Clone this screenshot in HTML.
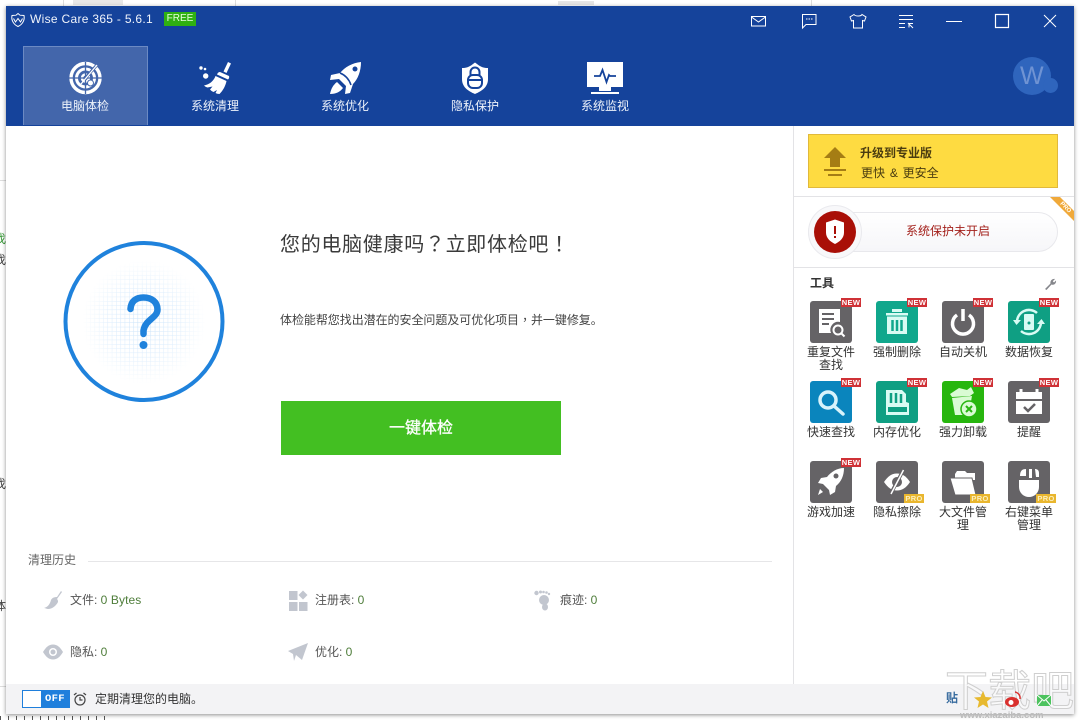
<!DOCTYPE html>
<html><head><meta charset="utf-8">
<style>
*{margin:0;padding:0;box-sizing:border-box}
html,body{width:1080px;height:720px;overflow:hidden;background:#fff;font-family:"Liberation Sans","Noto Sans CJK SC",sans-serif}
.a{position:absolute}
.t{position:absolute;white-space:nowrap;line-height:1}
.tc{font-family:"Noto Sans CJK TC",sans-serif}
#win{position:absolute;left:6px;top:6px;width:1068px;height:708px;background:#fff;box-shadow:0 1px 4px rgba(0,0,0,.45)}
.nav{position:absolute;top:99px;width:100px;text-align:center;color:#eef3fb;font-size:12px;line-height:14px}
.ico{position:absolute;width:42px;height:42px;border-radius:3px;background:#656366}
.new,.pro{position:absolute;width:20px;height:9px;font-size:7.5px;line-height:9px;font-weight:bold;text-align:center;color:#fff;letter-spacing:.3px}
.new{background:#cf3136}
.pro{background:#e9b62e;color:#fbeebc}
.lb{position:absolute;width:54px;text-align:center;font-size:12px;line-height:13px;color:#333}
.h{position:absolute;font-size:12px;line-height:14px;color:#555;white-space:nowrap}
.h b{font-weight:normal;color:#4e7d3a;letter-spacing:.1px}
.i{position:absolute;left:0;top:0}
</style></head><body>
<div class="t" style="left:-6px;top:233px;font-size:12px;color:#3a9a3a">找</div>
<div class="t" style="left:-6px;top:254px;font-size:12px;color:#444">找</div>
<div class="t" style="left:-6px;top:478px;font-size:12px;color:#444">找</div>
<div class="t" style="left:-6px;top:600px;font-size:12px;color:#444">体</div>
<div class="a" style="left:63px;top:0;width:1px;height:6px;background:#ddd"></div>
<div class="a" style="left:235px;top:0;width:1px;height:6px;background:#ddd"></div>
<div class="a" style="left:811px;top:0;width:1px;height:6px;background:#ddd"></div>
<div class="a" style="left:73px;top:0;width:50px;height:5px;background:#e8e8e8"></div>
<div class="a" style="left:558px;top:1px;width:36px;height:4px;background:#e6e6e6"></div>
<div class="a" style="left:0;top:180px;width:6px;height:1px;background:#ddd"></div>
<div class="a" style="left:0;top:686px;width:6px;height:1px;background:#ddd"></div>
<div class="a" style="left:0;top:716px;width:110px;height:4px;background:repeating-linear-gradient(90deg,#555 0 1px,#fff 1px 8px)"></div>

<div id="win"></div>
<!-- header -->
<div class="a" style="left:6px;top:6px;width:1068px;height:120px;background:#15439b"></div>
<svg class="a" style="left:10px;top:12px" width="16" height="16" viewBox="0 0 16 16" fill="none" stroke="#fff" stroke-width="1"><path d="M8 1.500L10 3.200 14 3.500C15 8 12.500 12.500 8 14.500 3.500 12.500 1 8 2 3.500L6 3.200Z"/><path d="M3.500 6.500L5.500 10 8 6.500 10.500 10 12.500 6.500"/></svg>
<div class="t" style="left:30px;top:13px;font-size:12px;letter-spacing:.3px;color:#f0f4fb">Wise Care 365 - 5.6.1</div>
<div class="a" style="left:164px;top:12px;width:32px;height:14px;background:#2fb012;color:#e8ffe0;font-size:10px;line-height:14px;text-align:center">FREE</div>

<svg class="a" style="left:740px;top:6px" width="334" height="40" viewBox="740 6 334 40" fill="none" stroke="#fff" stroke-width="1">
<path d="M751.500 16.500h14v9.500h-14zM751.500 17l7 5 7-5"/>
<path d="M802.500 14.500h13.500v10h-10l-3.500 3.500zM806 19h1.500M808.500 19h1.500M811 19h1.500" />
<path d="M854 14.500l-4 2.500 1.500 4 2-.5v7.500h9v-7.500l2 .5 1.500-4-4-2.500c-1 2-6.500 2-8 0z"/>
<path d="M899 15.500h14M899 19.500h14M899 23.500h6M899 27.500h6M909 27.500v-4h4M908 23l5 5" stroke-width="1"/>
<path d="M946 21.500h16"/>
<path d="M995.500 14.500h13v13h-13z" stroke-width="1.200"/>
<path d="M1044 15l12 12M1056 15l-12 12"/>
</svg>

<!-- active tab -->
<div class="a" style="left:23px;top:46px;width:125px;height:79px;background:#4366ab;border:1px solid #6c8ac3;border-bottom:0"></div>

<!-- radar -->
<svg class="a" style="left:67px;top:60px" width="38" height="36" viewBox="0 0 38 36" fill="none" stroke="#fff">
<circle cx="18.500" cy="18" r="14.500" stroke-width="3.400"/><circle cx="18.500" cy="18" r="9" stroke-width="3"/><circle cx="18.500" cy="18" r="3.500" stroke-width="2.500"/>
<path d="M18.500 2v32M2 18h33" stroke="#4366ab" stroke-width="1.300"/><path d="M29 6L18.500 18" stroke="#4366ab" stroke-width="3"/><path d="M30 5L14 24" stroke="#fff" stroke-width="1.300"/><circle cx="23.500" cy="23" r="3" fill="#fff" stroke="#4366ab"/></svg>
<!-- broom -->
<svg class="a" style="left:197px;top:60px" width="38" height="36" viewBox="0 0 38 36" fill="#fff">
<path d="M31 2l3 1.500-4.500 9.500-3-1.500z"/><path d="M23 12l9 4c.5 1.500 0 2.500-1 3.500l-11-5c.5-1.500 1.500-2.500 3-2.500z"/>
<path d="M18.500 16l11 5c-1 5-3.500 9.500-7 13-1.500 0-3-.5-4-1l1.500-3-3.500 2c-1.500-.5-2.500-1.500-3.500-2.500l2.500-3-5 1c-1.500-.5-2.500-1-3.500-2 5-1 9.500-4 11.500-9.500z"/>
<circle cx="4" cy="8" r="1.700"/><circle cx="8" cy="9" r="1.300"/><circle cx="8.700" cy="16" r="2.700"/></svg>
<!-- rocket -->
<svg class="a" style="left:328px;top:60px" width="36" height="36" viewBox="0 0 36 36" fill="#fff">
<path d="M33 2c-9 1-16 5-21 11l-9 2-1 5 9-1 7 7-1 8 5-1 3-9c5-5 8-13 8-22z"/>
<path d="M12 13c5 2 9 6 11 12" fill="none" stroke="#15439b" stroke-width="1.500"/>
<circle cx="27" cy="9" r="2.500" fill="#15439b"/><path d="M9 22l6 6c-3 4-7 6-13 6 1-5 3-9 7-12z"/></svg>
<!-- shield -->
<svg class="a" style="left:461px;top:61px" width="28" height="34" viewBox="0 0 28 34">
<path d="M14 1.500l4 3c2.500 1.500 5 2.500 9 2.500v11c0 8-6 12-13 15C7 30 1 26 1 18V7c4 0 6.500-1 9-2.500z" fill="#fff"/>
<path d="M9.500 15v-4a4.500 4.500 0 0 1 9 0v4" fill="none" stroke="#15439b" stroke-width="2"/>
<rect x="7" y="14" width="14" height="13" rx="5" fill="none" stroke="#15439b" stroke-width="2"/><path d="M8 19h12" stroke="#15439b" stroke-width="2"/></svg>
<!-- monitor -->
<svg class="a" style="left:587px;top:62px" width="36" height="33" viewBox="0 0 36 33">
<rect width="36" height="25" fill="#fff"/><rect x="12" y="25" width="12" height="4" fill="#fff"/><rect x="4" y="30" width="28" height="2" fill="#fff"/>
<path d="M7 14h6l2.500-6 4 12 2.500-7 1 1h6" fill="none" stroke="#15439b" stroke-width="1.800"/></svg>

<div class="nav" style="left:35px">电脑体检</div>
<div class="nav" style="left:165px">系统清理</div>
<div class="nav" style="left:295px">系统优化</div>
<div class="nav" style="left:425px">隐私保护</div>
<div class="nav" style="left:555px">系统监视</div>

<!-- avatar -->
<div class="a" style="left:1013px;top:57px;width:38px;height:38px;border-radius:50%;background:#2f65bd"></div>
<div class="a" style="left:1043px;top:78px;width:15px;height:15px;border-radius:50%;background:#2f65bd"></div>
<div class="t" style="left:1020px;top:64px;font-size:25px;color:#6f93d3">W</div>

<!-- sidebar divider -->
<div class="a" style="left:793px;top:126px;width:1px;height:558px;background:#e3e3e6"></div>

<!-- main circle -->
<svg class="a" style="left:50px;top:228px" width="190" height="190" viewBox="50 228 190 190">
<defs>
<pattern id="g" width="4.300" height="4.300" patternUnits="userSpaceOnUse"><path d="M0 0h4.300M0 0v4.300" stroke="#c4e0fa" stroke-width="1" fill="none"/></pattern>
<radialGradient id="rg"><stop offset="0" stop-color="#fff"/><stop offset=".6" stop-color="#888"/><stop offset="1" stop-color="#000"/></radialGradient>
<mask id="m"><circle cx="144" cy="322" r="62" fill="url(#rg)"/></mask>
</defs>
<circle cx="144" cy="322" r="62" fill="url(#g)" mask="url(#m)"/>
<circle cx="144" cy="321.500" r="78.500" fill="none" stroke="#1f82dc" stroke-width="4"/>
<path d="M130.500 309C131 301 136 297.500 143.500 297.500 151.500 297.500 157.500 302 157.500 309.500 157.500 318 145.500 319 143.500 330.500V334" fill="none" stroke="#1f82dc" stroke-width="6.500" stroke-linecap="round"/>
<circle cx="143.500" cy="345" r="4" fill="#1f82dc"/></svg>

<div class="t" style="left:280px;top:233px;font-size:20px;letter-spacing:.7px;color:#3a3a3a">您的电脑健康吗<span class="tc">？</span>立即体检吧<span class="tc">！</span></div>
<div class="t" style="left:280px;top:314px;font-size:12px;letter-spacing:-.05px;color:#444">体检能帮您找出潜在的安全问题及可优化项目<span class="tc">，</span>并一键修复。</div>
<div class="a" style="left:281px;top:401px;width:280px;height:54px;background:#43bf22;color:#fff;font-size:16px;line-height:55px;text-align:center;-webkit-text-stroke:.3px #fff">一键体检</div>

<!-- history -->
<div class="h" style="left:28px;top:553px;color:#666">清理历史</div>
<div class="a" style="left:88px;top:561px;width:684px;height:1px;background:#e6e6e8"></div>
<svg class="a" style="left:40px;top:588px" width="300" height="76" viewBox="40 588 300 76" fill="#c2c6cf">
<path d="M61 591l1 1-5 7c1 1 1 2 1 3-2 4-6 7-10 7-1 0-3-1-4-1 4-1 6-4 7-8 1-2 3-3 6-3z"/>
<path d="M289 591h8.500v9H289zM289 602h8.500v9H289zM299 602h8.500v9H299zM303 590.500l4.500 4.500-4.500 4.500-4.500-4.500z"/>
<path d="M43 652c3-5 6-7.500 10-7.500s7 2.500 10 7.500c-3 5-6 7.500-10 7.500s-7-2.500-10-7.500z"/><circle cx="53" cy="652" r="4" fill="#fff"/><circle cx="53" cy="652" r="2.500"/>
<path d="M288 651l20-8-6 17-6-5-2 6-1-7z"/>
</svg>
<svg class="a" style="left:532px;top:588px" width="22" height="24" viewBox="0 0 22 24" fill="#c2c6cf"><ellipse cx="12" cy="12" rx="5" ry="5"/><ellipse cx="13" cy="19" rx="3" ry="3.500"/><circle cx="4.500" cy="5" r="2.200"/><circle cx="8.500" cy="4" r="1.500"/><circle cx="11.500" cy="4" r="1.300"/><circle cx="14.500" cy="4.500" r="1.300"/><circle cx="17" cy="6" r="1.200"/></svg>
<div class="h" style="left:70px;top:593px">文件: <b>0 Bytes</b></div>
<div class="h" style="left:315px;top:593px">注册表: <b>0</b></div>
<div class="h" style="left:560px;top:593px">痕迹: <b>0</b></div>
<div class="h" style="left:70px;top:645px">隐私: <b>0</b></div>
<div class="h" style="left:315px;top:645px">优化: <b>0</b></div>

<!-- upgrade -->
<div class="a" style="left:808px;top:134px;width:250px;height:54px;background:#fedb41;border:1px solid #e1b93b"></div>
<svg class="a" style="left:823px;top:146px" width="24" height="32" viewBox="0 0 24 32" fill="#a57d14"><path d="M12 1l11 11h-6v9H7v-9H1z"/><rect x="1" y="23" width="22" height="2"/><rect x="5" y="28" width="14" height="2"/></svg>
<div class="t" style="left:860px;top:147px;font-size:12px;font-weight:bold;color:#4a3c10">升级到专业版</div>
<div class="t" style="left:861px;top:167px;font-size:12px;word-spacing:1.500px;color:#4a3c10">更快 &amp; 更安全</div>

<div class="a" style="left:794px;top:196px;width:280px;height:1px;background:#e3e3e6"></div>
<div class="a" style="left:808px;top:212px;width:250px;height:40px;border-radius:20px;border:1px solid #e8e8ec;background:linear-gradient(#fff,#f6f6f9)"></div>
<div class="a" style="left:808px;top:205px;width:54px;height:54px;border-radius:50%;background:#f8f8fa;border:1px solid #eaeaee"></div>
<div class="a" style="left:814px;top:211px;width:42px;height:42px;border-radius:50%;background:#a90f07"></div>
<svg class="a" style="left:825px;top:219px" width="20" height="26" viewBox="0 0 20 26"><path d="M10 .5L19 3.500v10c0 5.500-4 9-9 11.500-5-2.500-9-6-9-11.500v-10z" fill="#fff"/><path d="M10 7v8" stroke="#a90f07" stroke-width="2"/><path d="M10 17v2" stroke="#a90f07" stroke-width="2"/></svg>
<div class="t" style="left:906px;top:225px;font-size:12px;color:#a3201b">系统保护未开启</div>
<svg class="a" style="left:1050px;top:197px" width="24" height="24"><path d="M0 0h10l14 14v10z" fill="#f0a93a"/><text transform="translate(14.500 11.500) rotate(45)" font-size="6" font-weight="bold" fill="#fff" font-family="Liberation Sans" text-anchor="middle">PRO</text></svg>
<div class="a" style="left:794px;top:267px;width:280px;height:1px;background:#e3e3e6"></div>
<div class="t" style="left:810px;top:277px;font-size:12px;font-weight:bold;color:#333">工具</div>
<svg class="a" style="left:1043px;top:277px" width="14" height="14" viewBox="0 0 14 14"><path d="M2 12L7.500 6.500C7 4 9 1.500 12 2L9.800 4.200 11 5.500 13 3.500C13.500 6.500 11 8.500 8.500 7.500L3.500 13z" fill="#85868b"/></svg>

<!-- tools row1 -->
<div class="ico" style="left:810px;top:301px"><svg class="i" width="42" height="42" viewBox="0 0 42 42"><path d="M9 8h21v13a8 8 0 0 0-9 11H9z" fill="#fff"/><path d="M12 13h12M12 18h12M12 23h7" stroke="#656366" stroke-width="2"/><circle cx="28" cy="29" r="4.500" fill="none" stroke="#fff" stroke-width="2"/><path d="M31 32l3.500 3.500" stroke="#fff" stroke-width="2"/></svg></div>
<div class="ico" style="left:876px;top:301px;background:#10a78c"><svg class="i" width="42" height="42" viewBox="0 0 42 42" fill="#d9fbf3"><path d="M10 12h22v2.500H10zM16 8h10v3H16z"/><path d="M11 15.500h20V33H11z"/><path d="M16.500 19v11M21 19v11M25.500 19v11" stroke="#10a78c" stroke-width="2.500"/></svg></div>
<div class="ico" style="left:942px;top:301px"><svg class="i" width="42" height="42" viewBox="0 0 42 42" fill="none" stroke="#fff" stroke-width="3.500"><path d="M15 14a10.500 10.500 0 1 0 12 0"/><path d="M21 8v12"/></svg></div>
<div class="ico" style="left:1008px;top:301px;background:#0f9f83"><svg class="i" width="42" height="42" viewBox="0 0 42 42" fill="none" stroke="#d9fbf3" stroke-width="2.500"><path d="M9 21a12 12 0 0 1 20-9M33 21a12 12 0 0 1-20 9"/><path d="M5 19l3.500 5L13 19zM37 23l-3.500-5L29 23z" fill="#d9fbf3" stroke="none"/><rect x="16" y="13" width="10" height="16" rx="1" fill="#d9fbf3" stroke="none"/><circle cx="21" cy="22" r="1.500" fill="#0f9f83" stroke="none"/></svg></div>
<!-- row2 -->
<div class="ico" style="left:810px;top:381px;background:#0a85bd"><svg class="i" width="42" height="42" viewBox="0 0 42 42" fill="none" stroke="#d8f3fb" stroke-width="3.500"><circle cx="18" cy="19" r="8"/><path d="M24 25l9 8" stroke-linecap="round"/></svg></div>
<div class="ico" style="left:876px;top:381px;background:#0f9f83"><svg class="i" width="42" height="42" viewBox="0 0 42 42"><path d="M10 9h16l4 4v8l3 1v12H10z" fill="#d9fbf3"/><path d="M15 12v10M20 12v10M25 13v9" stroke="#0f9f83" stroke-width="2.500"/><rect x="12" y="26" width="19" height="5" fill="#0f9f83"/></svg></div>
<div class="ico" style="left:942px;top:381px;background:#27b60e"><svg class="i" width="42" height="42" viewBox="0 0 42 42"><path d="M8 13l9-6 8 2 4-3 3 6-4 3-18 1z" fill="#d9fbd3"/><path d="M10 17l20-2-2 11-7 8h-8z" fill="#d9fbd3"/><circle cx="27" cy="28" r="8" fill="#d9fbd3" stroke="#27b60e" stroke-width="1.500"/><path d="M24 25l6 6M30 25l-6 6" stroke="#27b60e" stroke-width="2"/></svg></div>
<div class="ico" style="left:1008px;top:381px"><svg class="i" width="42" height="42" viewBox="0 0 42 42"><path d="M8 11h26v7H8z" fill="#fff"/><path d="M13 8v4M29 8v4" stroke="#fff" stroke-width="3"/><path d="M8 20h26v13H8z" fill="#fff"/><path d="M16 26l4 4 7-7" fill="none" stroke="#656366" stroke-width="2.500"/></svg></div>
<!-- row3 -->
<div class="ico" style="left:810px;top:461px"><svg class="i" width="42" height="42" viewBox="0 0 42 42" fill="#fff"><path d="M34 7c0 8-3 14-8 18l-1 6-5 3-1-5-6-6-5-1 3-5 6-1c4-5 10-9 17-9z"/><circle cx="26" cy="15" r="2.500" fill="#656366"/><path d="M10 28l3 3-5 3z"/></svg></div>
<div class="ico" style="left:876px;top:461px"><svg class="i" width="42" height="42" viewBox="0 0 42 42"><path d="M8 21c4-6 8-8.500 13-8.500S30 15 34 21c-4 6-8 8.500-13 8.500S12 27 8 21z" fill="#fff"/><circle cx="21" cy="21" r="5" fill="#656366"/><path d="M28 8L14 34" stroke="#656366" stroke-width="3.500"/><path d="M27.500 9L15 33" stroke="#fff" stroke-width="1.500"/></svg></div>
<div class="ico" style="left:942px;top:461px"><svg class="i" width="42" height="42" viewBox="0 0 42 42" fill="#fff"><path d="M13 13l2-3h8l2 2h8v7H13z"/><path d="M8 17h22l4 17H13z" stroke="#656366" stroke-width="1"/></svg></div>
<div class="ico" style="left:1008px;top:461px"><svg class="i" width="42" height="42" viewBox="0 0 42 42" fill="#fff"><path d="M12 15c0-5 2-7 6-7v7zM21 8h3v9h-3zM27 8c2 0 4 1 4 4v4h-3z" /><path d="M11 19h20v7a10 10 0 0 1-20 0z"/></svg></div>

<div class="new" style="left:841px;top:298px">NEW</div><div class="new" style="left:907px;top:298px">NEW</div><div class="new" style="left:973px;top:298px">NEW</div><div class="new" style="left:1039px;top:298px">NEW</div>
<div class="new" style="left:841px;top:378px">NEW</div><div class="new" style="left:907px;top:378px">NEW</div><div class="new" style="left:973px;top:378px">NEW</div><div class="new" style="left:1039px;top:378px">NEW</div>
<div class="new" style="left:841px;top:458px">NEW</div>
<div class="pro" style="left:904px;top:494px">PRO</div><div class="pro" style="left:970px;top:494px">PRO</div><div class="pro" style="left:1036px;top:494px">PRO</div>

<div class="lb" style="left:804px;top:346px">重复文件<br>查找</div>
<div class="lb" style="left:870px;top:346px">强制删除</div>
<div class="lb" style="left:936px;top:346px">自动关机</div>
<div class="lb" style="left:1002px;top:346px">数据恢复</div>
<div class="lb" style="left:804px;top:426px">快速查找</div>
<div class="lb" style="left:870px;top:426px">内存优化</div>
<div class="lb" style="left:936px;top:426px">强力卸载</div>
<div class="lb" style="left:1002px;top:426px">提醒</div>
<div class="lb" style="left:804px;top:506px">游戏加速</div>
<div class="lb" style="left:870px;top:506px">隐私擦除</div>
<div class="lb" style="left:936px;top:506px">大文件管<br>理</div>
<div class="lb" style="left:1002px;top:506px">右键菜单<br>管理</div>

<!-- footer -->
<div class="a" style="left:6px;top:684px;width:1068px;height:30px;background:#f3f3f5"></div>
<div class="a" style="left:22px;top:690px;width:48px;height:18px;background:#1f7fdc;border:1px solid #1f7fdc"></div>
<div class="a" style="left:23px;top:691px;width:18px;height:16px;background:#fff"></div>
<div class="t" style="left:45px;top:694px;font-family:'Liberation Mono',monospace;font-size:10.500px;font-weight:bold;color:#fff;letter-spacing:.3px">OFF</div>
<svg class="a" style="left:73px;top:692px" width="14" height="14" viewBox="0 0 14 14" fill="none" stroke="#444" stroke-width="1.200"><circle cx="7" cy="8" r="5"/><path d="M7 5v3h2.500M1 3l2.500-2M13 3l-2.500-2"/></svg>
<div class="t" style="left:95px;top:693px;font-size:12px;color:#333">定期清理您的电脑。</div>
<div class="t" style="left:946px;top:692px;font-size:12px;font-weight:bold;color:#376b9e">贴</div>
<!-- watermark -->
<svg class="a" style="left:940px;top:660px" width="140" height="60" viewBox="0 0 140 60">
<text x="5" y="46" font-size="43" font-family="Noto Sans CJK SC" fill="rgba(255,255,255,.5)" stroke="#cfcfcf" stroke-width="1">下载吧</text>
<text x="20" y="58" font-size="9.500" font-family="Liberation Sans" font-weight="bold" fill="#bbb">www.xiazaiba.com</text></svg>
<svg class="a" style="left:974px;top:690px" width="80" height="20" viewBox="0 0 80 20">
<path d="M9 1l2.500 6 6.500.5-5 4 1.500 6.500-5.500-3.500L3.500 18 5 11.500 0 7.500 6.500 7z" fill="#e7b92f"/>
<ellipse cx="38" cy="12" rx="7" ry="5" fill="#d9302e"/><circle cx="37" cy="12.500" r="2.500" fill="#fff"/><path d="M41 2a6 6 0 0 1 5 7" fill="none" stroke="#d9302e" stroke-width="1.500"/>
<rect x="63" y="5" width="14" height="11" fill="#4cc35e"/><path d="M63 5l7 6 7-6M63 16l5-6M77 16l-5-6" fill="none" stroke="#fff"/></svg>
</body></html>
